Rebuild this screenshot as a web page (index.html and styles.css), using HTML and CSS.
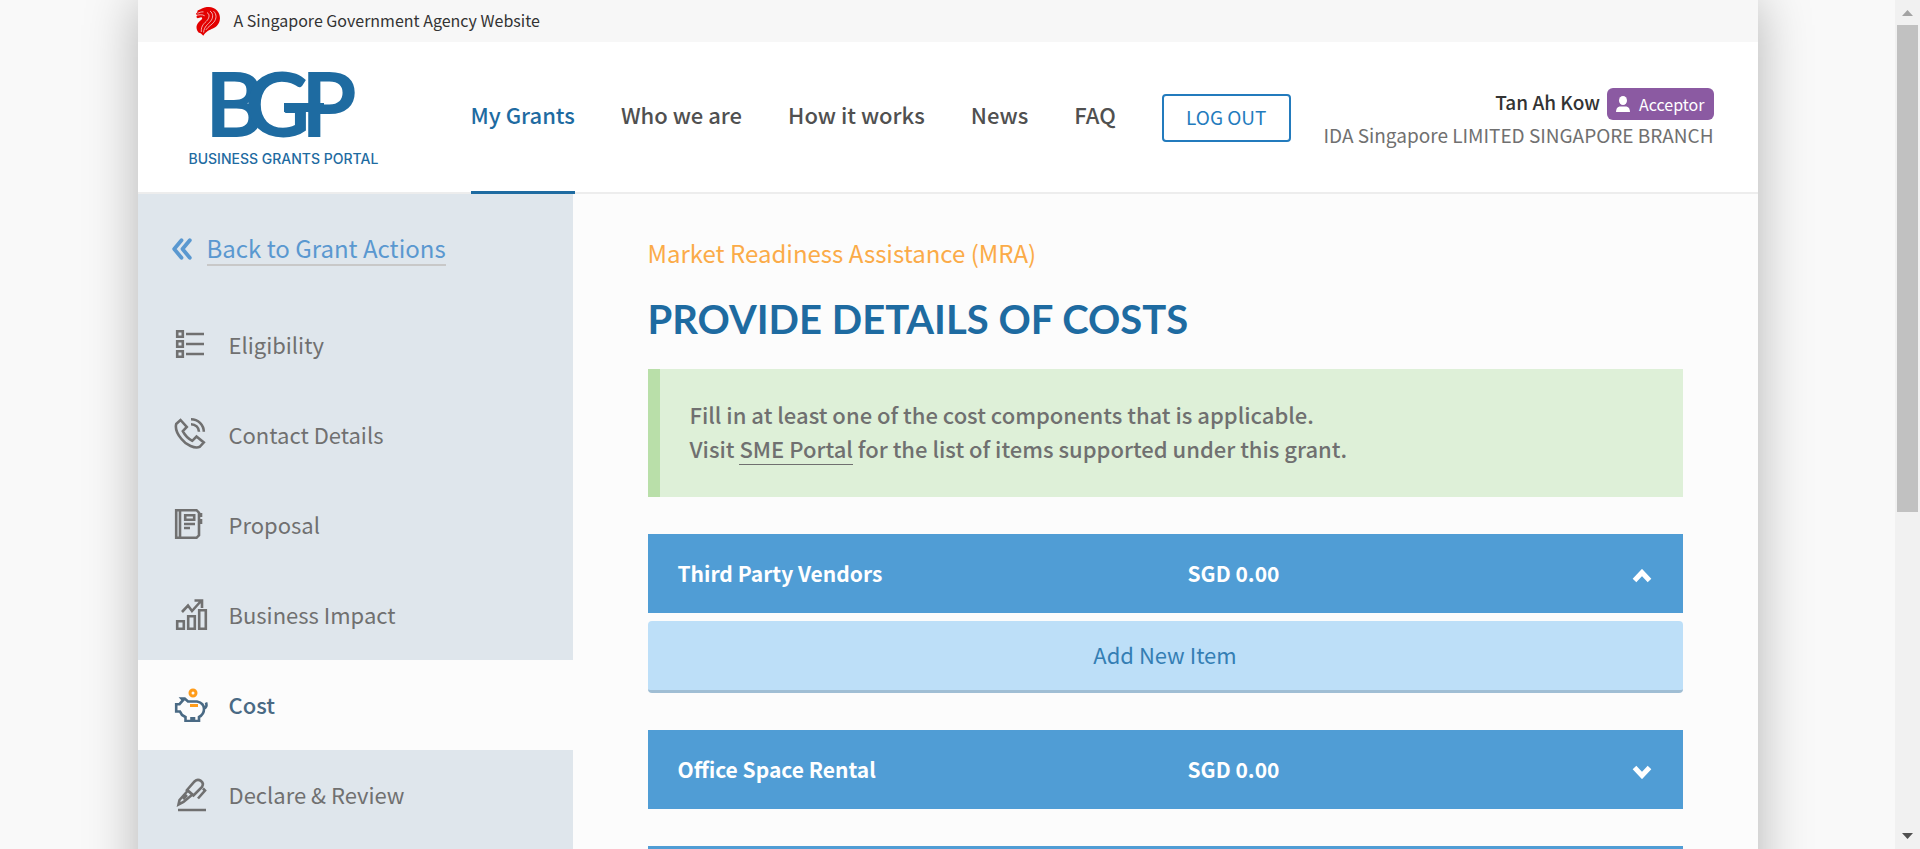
FILE: index.html
```
<!DOCTYPE html>
<html lang="en">
<head>
<meta charset="utf-8">
<title>Business Grants Portal</title>
<link rel="stylesheet" href="styles.css">
</head>
<body>
<div class="window">
  <div class="viewport">
    <div class="page">
      <div class="masthead">
        <svg class="lion" viewBox="0 0 24 29" aria-hidden="true">
          <path fill="#e30000" d="M0 6.500 1.200 5.400 1.600 3.600 4.500 2.300C7 .6 10 0 13 0c3 .1 6 1.300 8 3.400 2.300 2.400 3.200 5.600 2.900 8.600-.4 4.800-3 7.600-7 9.500-3.500 1.600-7 2.700-9.600 7.300C6 27.500 4.700 26 2.800 25.800 1 23.800.2 21.500.6 19c.6-3.200 3.200-4.700 5-6.500 1-1.200.6-2.200-.5-2.300-1.300 0-2.300.8-3.600 1L.3 10 1 8.800z"/>
          <path fill="none" stroke="#f7f7f7" stroke-width=".7" d="M1.500 6.300c2-.7 3.500-1.700 6-1.400M0 8.600c2-.9 6.600-1.400 8.700.2M11 5.500c3 1.800 2.400 5 .2 7.800C9 16 4.800 18 5.300 25M14 4c3.400 2.400 3.400 6.800.6 10.200-2.400 3-6.600 5.300-7 11.300M17.500 4.200c3.400 3 3.100 7.400.4 10.900-2 2.600-5.500 4.200-8 7.800"/>
        </svg>
        <span class="masthead-text">A Singapore Government Agency Website</span>
      </div>

      <header class="header">
        <a class="logo" href="#" aria-label="Business Grants Portal">
          <svg class="logo-mark" viewBox="0 0 140 68" aria-hidden="true">
            <text class="logo-letters" x="-6 34 90" y="66">BGP</text>
            <rect x="73" y="32" width="40" height="9" fill="#1e6ba1"/>
          </svg>
          <span class="logo-name">BUSINESS GRANTS PORTAL</span>
        </a>
        <nav class="nav">
          <a class="nav-link is-active" href="#">My Grants</a>
          <a class="nav-link" href="#">Who we are</a>
          <a class="nav-link" href="#">How it works</a>
          <a class="nav-link" href="#">News</a>
          <a class="nav-link" href="#">FAQ</a>
          <button class="logout" type="button">LOG OUT</button>
        </nav>
        <div class="user">
          <div class="user-line">
            <span class="user-name">Tan Ah Kow</span>
            <span class="badge">
              <svg class="badge-icon" viewBox="0 0 14 16" aria-hidden="true"><ellipse cx="7" cy="4.500" rx="4" ry="4.500" fill="#fff"/><path fill="#fff" d="M0 16c.2-3 1-5 3.500-5.500h7C13 11 13.800 13 14 16z"/></svg>
              Acceptor
            </span>
          </div>
          <div class="company">IDA Singapore LIMITED SINGAPORE BRANCH</div>
        </div>
      </header>

      <div class="body">
        <aside class="sidebar">
          <a class="back" href="#">
            <svg class="back-icon" viewBox="0 0 20 22" aria-hidden="true"><path fill="none" stroke="#5a98d0" stroke-width="3.800" stroke-linecap="round" stroke-linejoin="round" d="M9.500 2.200 2.200 11l7.300 8.800M17.800 2.200 10.500 11l7.300 8.800"/></svg>
            <span class="back-text">Back to Grant Actions</span>
          </a>
          <ul class="menu">
            <li><a class="menu-item" href="#">
              <svg class="icon" viewBox="0 0 36 36" aria-hidden="true"><path d="M3.200 5.200h5.600v5.600H3.200zM3.200 15.200h5.600v5.600H3.200zM3.200 25.200h5.600v5.600H3.200zM12 8h18M12 18h18M12 28h18"/></svg>
              Eligibility</a></li>
            <li><a class="menu-item" href="#">
              <svg class="icon" viewBox="0 0 36 36" aria-hidden="true"><path d="M2.200 8 6.500 4l6.300 7-4 4.200C11 19.500 14.500 23 18.300 24.800L22.500 20.500l7.300 6-4 4.300C21 33 12 29 7.500 23 3.300 18 1.200 12 2.200 8zM17 3.200c7 0 12.800 5.500 12.800 12.600M17 8.200c4.500 0 8 3.400 8 7.600"/></svg>
              Contact Details</a></li>
            <li><a class="menu-item" href="#">
              <svg class="icon" viewBox="0 0 36 36" aria-hidden="true"><path d="M2.200 4.200h20.300l2.500 2.500v22.600l-2.500 2.500H2.200zM6 4.200v27.600M11.200 9.200h9v4.600h-9zM10 18h11M10 22h6M27 7v4M27 13v5"/></svg>
              Proposal</a></li>
            <li><a class="menu-item" href="#">
              <svg class="icon" viewBox="0 0 36 36" aria-hidden="true"><path d="M3.200 25.200h6.600v7.600H3.200zM14.200 20.200h6.600v12.600h-6.600zM25.200 14.200h6.600v18.600h-6.600zM8 16l6-6.500 4 5.500 9-10M20.500 4.500H28V12"/></svg>
              Business Impact</a></li>
            <li><a class="menu-item is-current" href="#">
              <svg class="icon" viewBox="0 0 36 36" aria-hidden="true"><path d="M7.500 12.500h3.200L14 15.500h9c5 1 7 4 7 7.500 0 4-2 6.500-5 8v4h-5v-2.800h-2.500V35h-6v-4L8 29l-2-3.500H2.200v-7.300h3.300l3.500-4zM30 22.500c2-.5 3.200-2.500 2-6"/><path class="coin" d="M16 19.500h8"/><circle class="coin" cx="19" cy="7" r="3"/></svg>
              Cost</a></li>
            <li><a class="menu-item" href="#">
              <svg class="icon" viewBox="0 0 36 36" aria-hidden="true"><path d="M4.500 28.500 5.500 24 14 14.500l4.500 4L9.500 26zM13 14l7.500-8.500c4-4 10.500.5 7.500 5.500L19.500 19.500zM29 12.500l2 2-7 8M4 34h28M13 19l-4 4"/></svg>
              Declare &amp; Review</a></li>
          </ul>
        </aside>

        <main class="main">
          <p class="scheme">Market Readiness Assistance (MRA)</p>
          <h1 class="title">PROVIDE DETAILS OF COSTS</h1>
          <div class="notice">
            Fill in at least one of the cost components that is applicable.<br>
            Visit <a class="notice-link" href="#">SME Portal</a> for the list of items supported under this grant.
          </div>
          <section class="cost">
            <button class="cost-head" type="button" aria-expanded="true">
              <span class="cost-text">Third Party Vendors</span><span class="cost-text">SGD 0.00</span>
              <svg class="chevron" viewBox="0 0 20 14" aria-hidden="true"><path d="M2.500 11.500 10 3.500l7.500 8"/></svg>
            </button>
            <button class="add" type="button">Add New Item</button>
          </section>
          <section class="cost">
            <button class="cost-head" type="button" aria-expanded="false">
              <span class="cost-text">Office Space Rental</span><span class="cost-text">SGD 0.00</span>
              <svg class="chevron" viewBox="0 0 20 14" aria-hidden="true"><path d="M2.500 2.500 10 10.500l7.500-8"/></svg>
            </button>
          </section>
          <section class="cost">
            <button class="cost-head" type="button" aria-expanded="false" aria-label="Next cost item"></button>
          </section>
        </main>
      </div>
    </div>
  </div>
  <div class="scrollbar" aria-hidden="true">
    <svg class="scroll-arrow" viewBox="0 0 25 25"><path fill="#a3a3a3" d="M7 16h11l-5.500-6z"/></svg>
    <div class="track"><div class="thumb"></div></div>
    <svg class="scroll-arrow" viewBox="0 0 25 25"><path fill="#505050" d="M7 9h11l-5.500 6z"/></svg>
  </div>
</div>
</body>
</html>
```
FILE: styles.css
```
* { box-sizing: border-box; }

body {
  margin: 0;
  background: #f9f9f9;
  color: #707070;
  font-family: "Noto Sans CJK SC", "Noto Sans", sans-serif;
  font-size: 22px;
  line-height: 34px;
}

a { color: inherit; text-decoration: none; }
button { font: inherit; color: inherit; border: 0; padding: 0; cursor: pointer; }

.window { display: flex; height: 100vh; overflow: hidden; }
.viewport { flex: 1; overflow: hidden; }

.page {
  max-width: 1620px;
  min-height: 100%;
  margin: 0 auto;
  background: #fcfcfc;
  box-shadow: 0 0 50px rgba(0, 0, 0, .28);
}

/* Masthead */
.masthead {
  display: flex;
  align-items: center;
  gap: 14px;
  height: 42px;
  padding-left: 58px;
  background: #f7f7f7;
  color: #333;
  font-size: 16px;
}
.masthead-text { padding-bottom: 2px; }
.lion { width: 24px; height: 29px; }

/* Header */
.header {
  display: flex;
  height: 152px;
  padding: 0 44px 0 51px;
  background: #fff;
  border-bottom: 2px solid #ededed;
}
.logo { width: 282px; padding-top: 29px; color: #1e6ba1; }
.logo-mark { display: block; width: 140px; height: 68px; margin-left: 22px; overflow: visible; }
.logo-letters { font: 700 90px Lato, sans-serif; fill: #1e6ba1; }
.logo-name { display: block; margin-top: 8px; font: 500 14px/24px Inter, sans-serif; }

.nav { display: flex; align-items: flex-start; gap: 46px; font-weight: 500; color: #505050; white-space: nowrap; }
.nav-link { height: 152px; padding-top: 55px; }
.nav-link.is-active { color: #1e6ba1; border-bottom: 3px solid #1e6ba1; }
.logout {
  width: 129px;
  height: 48px;
  margin-top: 52px;
  padding-bottom: 2px;
  background: #fff;
  border: 2px solid #237bbd;
  border-radius: 4px;
  color: #237bbd;
  font-size: 19px;
  font-weight: 400;
}

.user { margin-left: auto; padding-top: 46px; text-align: right; font-size: 19px; line-height: 30px; white-space: nowrap; }
.user-line { display: flex; justify-content: flex-end; gap: 7px; }
.user-name { color: #333; font-weight: 500; line-height: 28px; }
.badge {
  display: flex;
  align-items: center;
  gap: 9px;
  height: 32px;
  padding: 0 9px;
  background: #8b5aa2;
  border-radius: 6px;
  color: #fff;
  font-size: 16px;
}
.badge-icon { width: 14px; height: 16px; }

/* Body */
.body { display: flex; }

.sidebar { flex: 0 0 435px; min-height: 720px; background: #dfe6ec; }
.back { display: flex; align-items: center; gap: 15px; padding: 37px 0 34px 34px; color: #5a98d0; font-size: 24px; line-height: 33px; }
.back-icon { width: 20px; height: 22px; }
.back-text { border-bottom: 2px solid #c8c8c8; }

.menu { margin: 0; padding: 0; list-style: none; }
.menu-item { display: flex; align-items: center; gap: 19px; height: 90px; padding: 0 0 2px 36px; }
.menu-item.is-current { background: #fcfcfc; color: #4a6a84; font-weight: 500; }
.icon { width: 36px; height: 36px; fill: none; stroke: currentColor; stroke-width: 2.600; }
.icon .coin { stroke: #ff9c1a; stroke-width: 3; }

.main { flex: 1; padding: 41px 75px 0; }
.scheme { margin: 0; color: #fbab48; font-size: 24px; line-height: 36px; }
.title { margin: 24px 0 26px; color: #1e6ba1; font: 700 40px/48px Lato, sans-serif; }

.notice {
  padding: 28px 30px 32px;
  background: #def0d8;
  border-left: 12px solid #b9dfa9;
  font-weight: 500;
}
.notice-link { border-bottom: 1px solid #707070; }

.cost { margin-top: 37px; }
.cost-head {
  display: grid;
  grid-template-columns: 510px 1fr 20px;
  align-items: center;
  width: 100%;
  height: 79px;
  padding: 0 31px 0 30px;
  background: #509dd5;
  color: #fff;
  font-size: 21px;
  font-weight: 700;
  text-align: left;
}
.cost-text { padding-bottom: 2px; }
.chevron { width: 20px; height: 14px; margin-top: 4px; fill: none; stroke: #fff; stroke-width: 5; }
.add {
  display: block;
  width: 100%;
  height: 72px;
  margin-top: 8px;
  padding-bottom: 3px;
  background: #bddff8;
  border-bottom: 3px solid #a0bed4;
  border-radius: 4px;
  color: #347eb4;
}

/* Scrollbar */
.scrollbar { display: flex; flex-direction: column; flex: 0 0 25px; background: #f1f1f1; }
.scroll-arrow { width: 25px; height: 25px; }
.track { flex: 1; padding: 0 2px; }
.thumb { height: 61%; background: #c1c1c1; }
```
